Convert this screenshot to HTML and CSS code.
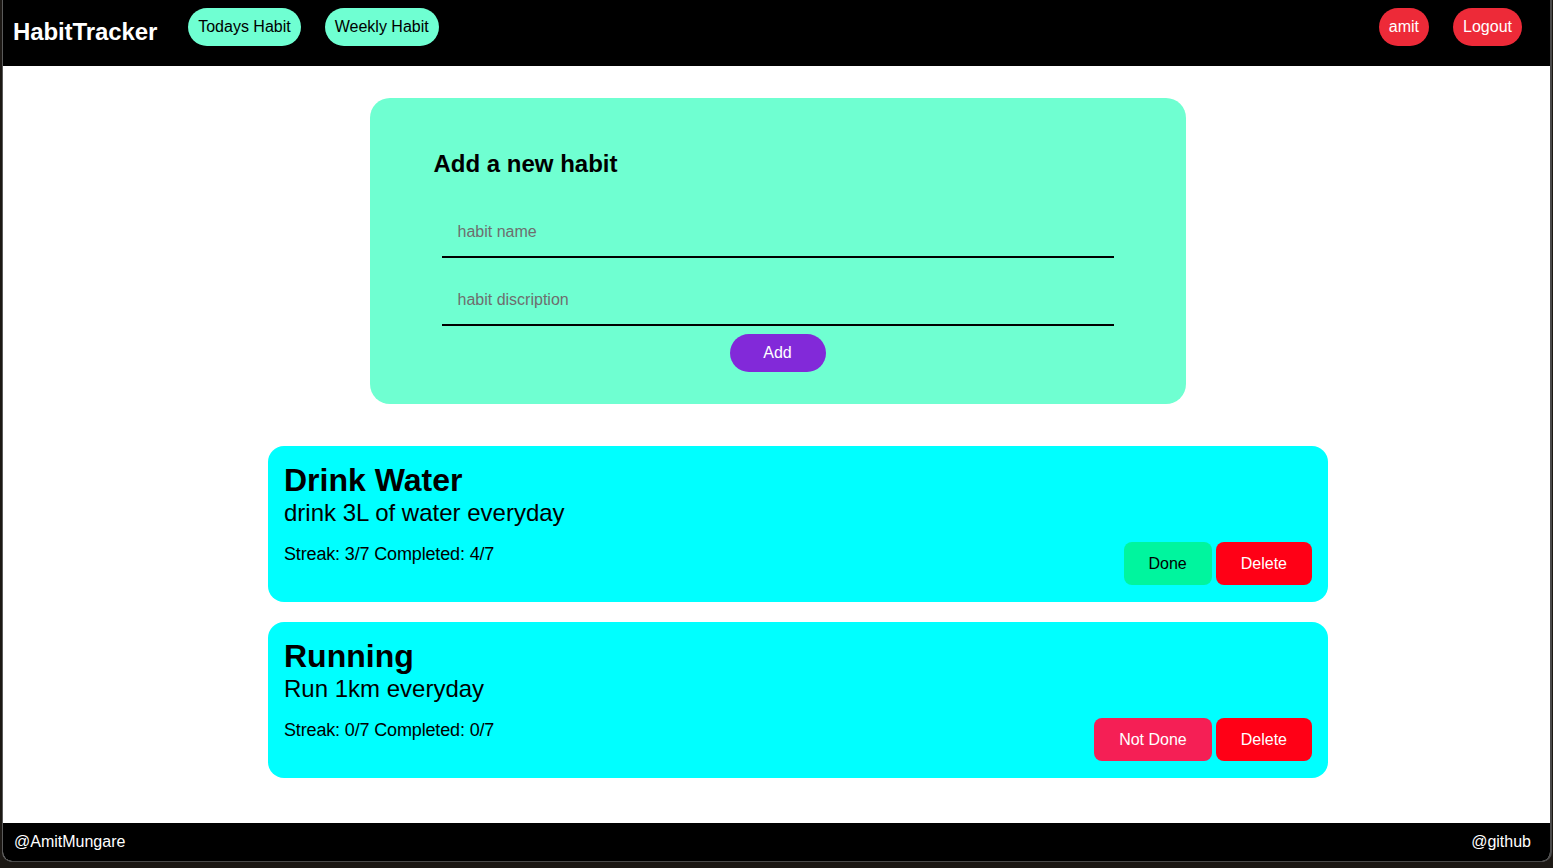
FILE: index.html
```html
<!DOCTYPE html>
<html lang="en">
<head>
<meta charset="utf-8">
<title>HabitTracker</title>
<link rel="stylesheet" href="styles.css">
</head>
<body>
<div class="window">
  <nav class="nav">
    <div class="logo">HabitTracker</div>
    <div class="nav-links">
      <button class="pill pill-mint">Todays Habit</button>
      <button class="pill pill-mint">Weekly Habit</button>
    </div>
    <div class="nav-right">
      <button class="pill pill-red">amit</button>
      <button class="pill pill-red">Logout</button>
    </div>
  </nav>

  <main class="main">
    <section class="form-card">
      <h2 class="form-title">Add a new habit</h2>
      <form class="habit-form">
        <input class="field" type="text" placeholder="habit name">
        <input class="field field-second" type="text" placeholder="habit discription">
        <button type="button" class="add-btn">Add</button>
      </form>
    </section>

    <ul class="habit-list">
      <li class="habit-card">
        <div class="habit-text">
          <h3 class="habit-name">Drink Water</h3>
          <div class="habit-desc">drink 3L of water everyday</div>
          <div class="habit-stats">Streak: 3/7 Completed: 4/7</div>
        </div>
        <div class="habit-actions">
          <button class="act act-done">Done</button>
          <button class="act act-delete">Delete</button>
        </div>
      </li>
      <li class="habit-card">
        <div class="habit-text">
          <h3 class="habit-name">Running</h3>
          <div class="habit-desc">Run 1km everyday</div>
          <div class="habit-stats">Streak: 0/7 Completed: 0/7</div>
        </div>
        <div class="habit-actions">
          <button class="act act-notdone">Not Done</button>
          <button class="act act-delete">Delete</button>
        </div>
      </li>
    </ul>
  </main>

  <footer class="footer">
    <span>@AmitMungare</span>
    <span>@github</span>
  </footer>
</div>
</body>
</html>
```

FILE: styles.css
```css
* {
  box-sizing: border-box;
}

html {
  background: #1c1814;
}

body {
  margin: 0;
  font-family: "Liberation Sans", Arial, Helvetica, sans-serif;
  color: #000;
}

.window {
  margin-left: 2px;
  width: 1550px;
  height: 862px;
  border-left: 1px solid #5a5a5a;
  border-right: 2px solid #4a4a4a;
  border-bottom: 1px solid #4a4a4a;
  border-radius: 0 0 10px 10px;
  overflow: hidden;
  display: flex;
  flex-direction: column;
  background: #fff;
}

/* NAV */
.nav {
  height: 66px;
  background: #000;
  display: flex;
  align-items: flex-end;
  padding: 8px 28px 20px 10px;
  flex-shrink: 0;
}

.logo {
  color: #fff;
  font-size: 24px;
  font-weight: bold;
  line-height: 28px;
  margin-right: 31px;
  letter-spacing: -0.1px;
}

.nav-links,
.nav-right {
  display: flex;
  gap: 24px;
}

.nav-right {
  margin-left: auto;
}

.pill {
  height: 38px;
  padding: 0 10px;
  border: none;
  border-radius: 19px;
  font-family: inherit;
  font-size: 16px;
  cursor: pointer;
}

.pill-mint {
  background: #6fffd2;
  color: #000;
}

.pill-red {
  background: #ed2a38;
  color: #fff;
}

/* MAIN */
.main {
  flex: 1;
  padding-top: 32px;
  display: flex;
  flex-direction: column;
  align-items: center;
}

.form-card {
  width: 816px;
  height: 306px;
  background: #6fffd1;
  border-radius: 20px;
  padding: 52px 0 0;
  margin: 0 0 42px 2px;
}

.form-title {
  margin: 0 0 30px 64px;
  font-size: 24px;
  line-height: 28px;
  font-weight: bold;
}

.habit-form {
  display: flex;
  flex-direction: column;
  align-items: center;
}

.field {
  width: 672px;
  height: 50px;
  border: none;
  border-bottom: 2px solid #000;
  background: transparent;
  padding: 0 16px;
  font-family: inherit;
  font-size: 16px;
  outline: none;
}

.field::placeholder {
  color: #6e6e6e;
}

.field-second {
  margin-top: 18px;
}

.add-btn {
  margin-top: 8px;
  width: 96px;
  height: 38px;
  border: none;
  border-radius: 19px;
  background: #8229d9;
  color: #fff;
  font-family: inherit;
  font-size: 16px;
}

/* HABITS */
.habit-list {
  list-style: none;
  margin: 0;
  width: 1103px;
  padding: 0 0 0 43px;
  display: flex;
  flex-direction: column;
  gap: 20px;
}

.habit-card {
  height: 156px;
  background: #00ffff;
  border-radius: 16px;
  padding: 16px;
  display: flex;
  justify-content: space-between;
  align-items: flex-end;
}

.habit-text {
  align-self: flex-start;
}

.habit-name {
  margin: 0;
  font-size: 32px;
  line-height: 37px;
  font-weight: bold;
}

.habit-desc {
  font-size: 24px;
  line-height: 28px;
}

.habit-stats {
  margin-top: 17px;
  font-size: 18px;
  line-height: 21px;
  letter-spacing: -0.15px;
}

.habit-actions {
  display: flex;
  gap: 4px;
  margin-bottom: 1px;
}

.act {
  height: 43px;
  padding: 0 25px;
  border: none;
  border-radius: 8px;
  font-family: inherit;
  font-size: 16px;
  cursor: pointer;
}

.act-done {
  background: #00f59e;
  color: #000;
}

.act-delete {
  background: #ff0016;
  color: #fff;
}

.act-notdone {
  background: #f51f55;
  color: #fff;
}

/* FOOTER */
.footer {
  height: 38px;
  background: #000;
  color: #fff;
  font-size: 16px;
  display: flex;
  align-items: center;
  justify-content: space-between;
  padding: 0 19px 0 11px;
  flex-shrink: 0;
}
```
